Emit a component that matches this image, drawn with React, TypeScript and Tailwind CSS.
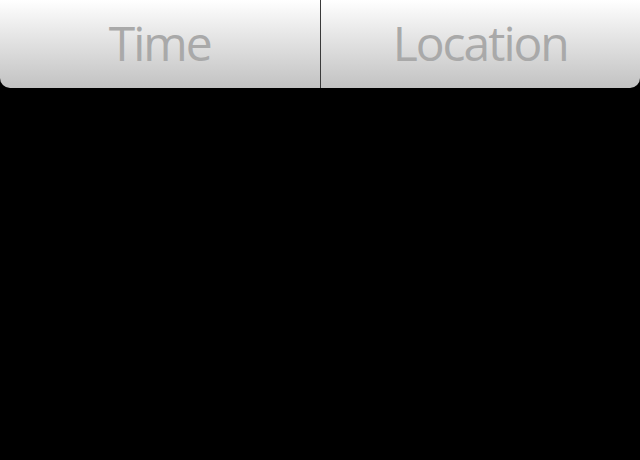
export default function App() {
  return (
    <div className="w-[640px] h-[460px] bg-black overflow-hidden">
      <div className="flex h-[88px] rounded-b-[10px] overflow-hidden bg-gradient-to-b from-[#ffffff] to-[#c2c2c2]">
        <div className="flex-1 flex items-center justify-center pb-[2px]">
          <span className="text-[48px] leading-none text-[#a9a9a9] tracking-[-2px] font-['Open_Sans',sans-serif]">Time</span>
        </div>
        <div className="w-px bg-[#3a3a3a]" />
        <div className="flex-1 flex items-center justify-center pb-[2px]">
          <span className="text-[48px] leading-none text-[#a9a9a9] tracking-[-2px] font-['Open_Sans',sans-serif]">Location</span>
        </div>
      </div>
    </div>
  );
}
